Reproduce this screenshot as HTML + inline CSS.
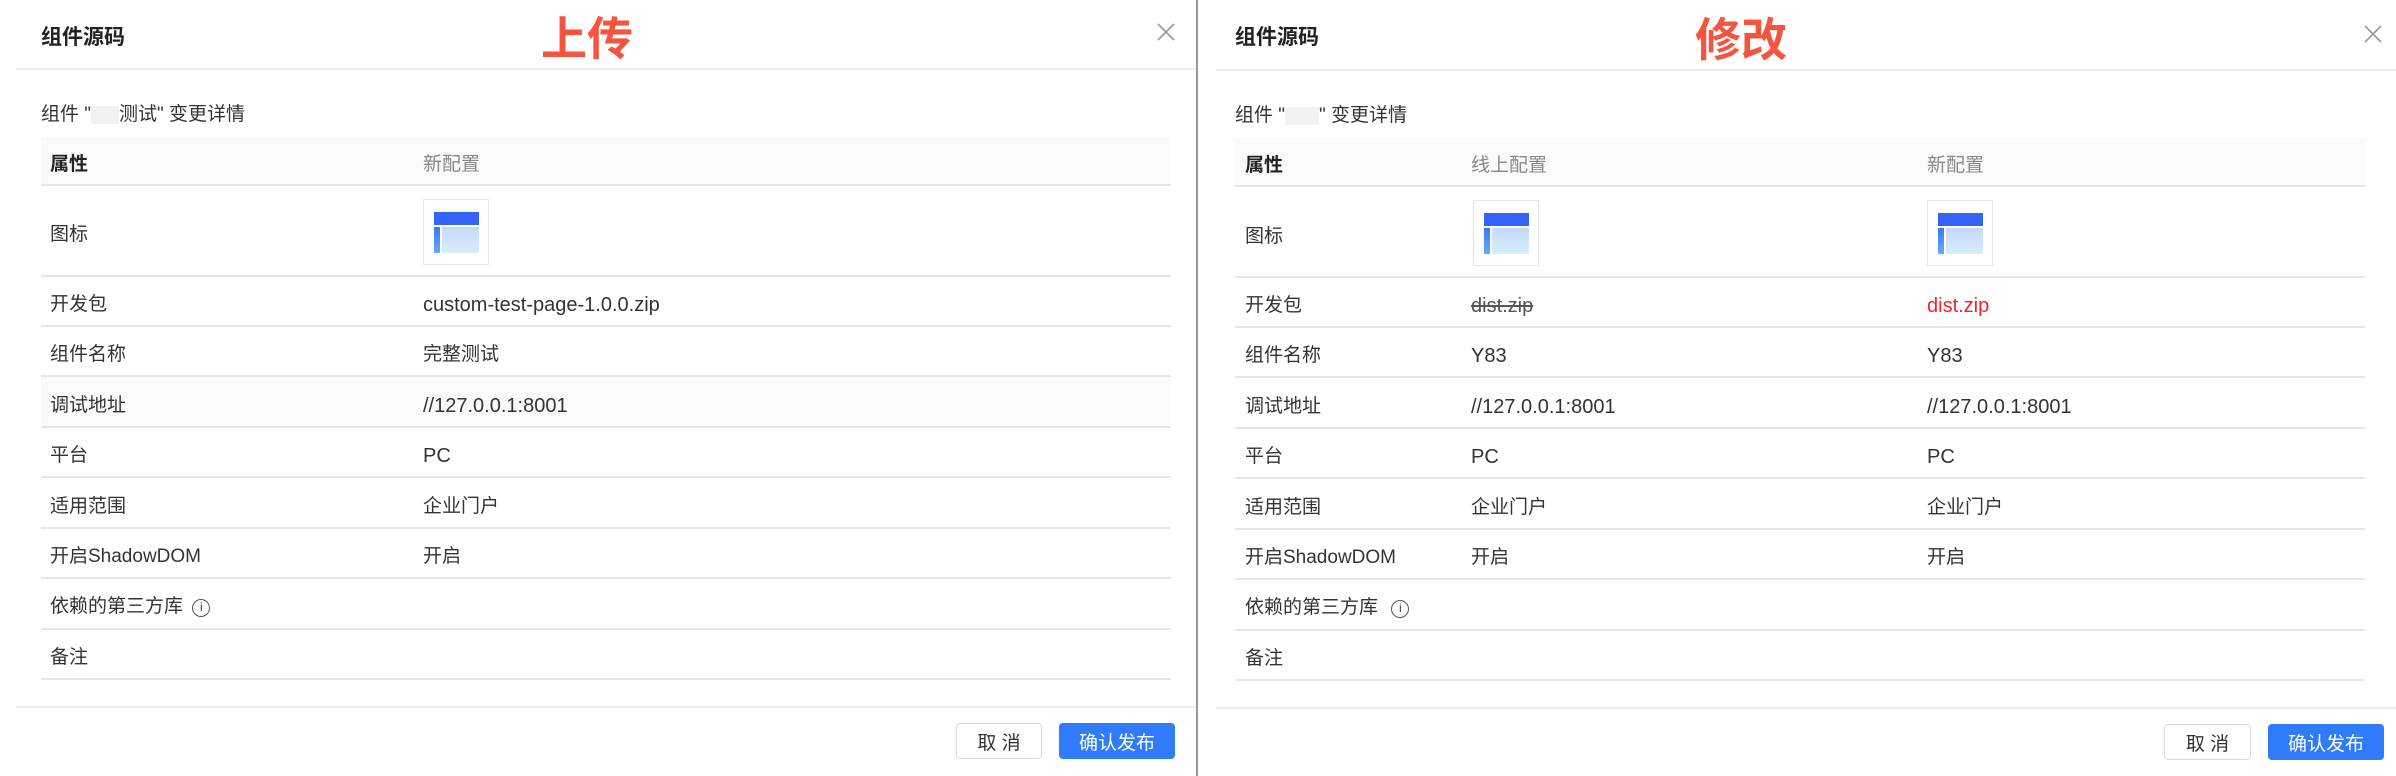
<!DOCTYPE html>
<html><head><meta charset="utf-8"><style>
*{margin:0;padding:0;box-sizing:border-box}
body{width:2396px;height:776px;background:#fff;position:relative;overflow:hidden;font-family:"Liberation Sans","Noto Sans CJK SC",sans-serif;color:#333}
.a{position:absolute;white-space:nowrap}
.t{font-size:21px;font-weight:bold;color:#222}
.red{font-size:46px;font-weight:bold;color:#f5543f;line-height:1}
.hl{position:absolute;height:2px;background:#ebebeb}
.c{font-size:19px;color:#333;line-height:20px;margin-top:3px}
.l{font-size:20px}
.g{color:#888}
.row{position:absolute;border-bottom:2px solid #e6e6e6}
.ic{position:absolute;width:66px;height:66px;border:1px solid #e6e6e6;background:#fff}
.ic i{position:absolute;display:block}
.btn{position:absolute;height:36px;border-radius:4px;font-size:19px;display:flex;align-items:center;justify-content:center}
.x{position:absolute;width:18px;height:18px}
</style></head><body>

<div style="position:absolute;left:1196px;top:0;width:2px;height:776px;background:#9a9a9a"></div>

<!-- LEFT -->
<div class="a t" style="left:41px;top:21px">组件源码</div>
<div class="a red" style="left:541px;top:16px">上传</div>
<svg class="x" style="left:1157px;top:23px" viewBox="0 0 18 18"><path d="M1 1L17 17M17 1L1 17" stroke="#999" stroke-width="1.6"/></svg>
<div class="hl" style="left:16px;top:68px;width:1180px"></div>
<div class="a c" style="left:41px;top:102px">组件 "<span style="display:inline-block;width:28px;height:18px;background:#f2f2f2;vertical-align:middle"></span>测试" 变更详情</div>

<div class="row" style="left:41px;top:137px;width:1130px;height:49px;background:#fafafa"></div>
<div class="a c" style="left:50px;top:152px;font-weight:bold;color:#222">属性</div>
<div class="a c g" style="left:423px;top:152px">新配置</div>

<div class="row" style="left:41px;top:186px;width:1130px;height:91px"></div>
<div class="a c" style="left:50px;top:222px">图标</div>
<div class="ic" style="left:423px;top:199px"><i style="left:10px;top:12px;width:45px;height:13px;background:#3563f5"></i><i style="left:10px;top:27px;width:6px;height:26px;background:linear-gradient(#3b78f5,#6aa9fb)"></i><i style="left:18px;top:27px;width:37px;height:26px;background:linear-gradient(#c6d8fb,#d9edfd)"></i></div>

<div class="row" style="left:41px;top:277px;width:1130px;height:50px"></div>
<div class="a c" style="left:50px;top:292px">开发包</div>
<div class="a c l" style="left:423px;top:292px">custom-test-page-1.0.0.zip</div>
<div class="row" style="left:41px;top:327px;width:1130px;height:50px"></div>
<div class="a c" style="left:50px;top:342px">组件名称</div>
<div class="a c" style="left:423px;top:342px">完整测试</div>
<div class="row" style="left:41px;top:377px;width:1130px;height:51px;background:#fafafa"></div>
<div class="a c" style="left:50px;top:393px">调试地址</div>
<div class="a c l" style="left:423px;top:393px">//127.0.0.1:8001</div>
<div class="row" style="left:41px;top:428px;width:1130px;height:50px"></div>
<div class="a c" style="left:50px;top:443px">平台</div>
<div class="a c l" style="left:423px;top:443px">PC</div>
<div class="row" style="left:41px;top:478px;width:1130px;height:51px"></div>
<div class="a c" style="left:50px;top:494px">适用范围</div>
<div class="a c" style="left:423px;top:494px">企业门户</div>
<div class="row" style="left:41px;top:529px;width:1130px;height:50px"></div>
<div class="a c" style="left:50px;top:544px">开启ShadowDOM</div>
<div class="a c" style="left:423px;top:544px">开启</div>
<div class="row" style="left:41px;top:579px;width:1130px;height:51px"></div>
<div class="a c" style="left:50px;top:594px">依赖的第三方库 <span style="display:inline-block;width:18px;height:18px;border:1.5px solid #555;border-radius:50%;font-size:12px;line-height:15px;text-align:center;vertical-align:1px;margin-left:4px">i</span></div>
<div class="row" style="left:41px;top:630px;width:1130px;height:50px"></div>
<div class="a c" style="left:50px;top:645px">备注</div>

<div class="hl" style="left:16px;top:706px;width:1180px"></div>
<div class="btn" style="left:956px;top:723px;width:86px;border:1px solid #d9d9d9;color:#333">取 消</div>
<div class="btn" style="left:1059px;top:723px;width:116px;background:#2f7bfc;color:#fff">确认发布</div>

<!-- RIGHT -->
<div class="a t" style="left:1235px;top:21px">组件源码</div>
<div class="a red" style="left:1695px;top:17px">修改</div>
<svg class="x" style="left:2364px;top:25px" viewBox="0 0 18 18"><path d="M1 1L17 17M17 1L1 17" stroke="#999" stroke-width="1.6"/></svg>
<div class="hl" style="left:1216px;top:69px;width:1180px"></div>
<div class="a c" style="left:1235px;top:103px">组件 "<span style="display:inline-block;width:34px;height:18px;background:#f2f2f2;vertical-align:middle"></span>" 变更详情</div>

<div class="row" style="left:1235px;top:138px;width:1130px;height:49px;background:#fafafa"></div>
<div class="a c" style="left:1245px;top:153px;font-weight:bold;color:#222">属性</div>
<div class="a c g" style="left:1471px;top:153px">线上配置</div>
<div class="a c g" style="left:1927px;top:153px">新配置</div>

<div class="row" style="left:1235px;top:187px;width:1130px;height:91px"></div>
<div class="a c" style="left:1245px;top:224px">图标</div>
<div class="ic" style="left:1473px;top:200px"><i style="left:10px;top:12px;width:45px;height:13px;background:#3563f5"></i><i style="left:10px;top:27px;width:6px;height:26px;background:linear-gradient(#3b78f5,#6aa9fb)"></i><i style="left:18px;top:27px;width:37px;height:26px;background:linear-gradient(#c6d8fb,#d9edfd)"></i></div>
<div class="ic" style="left:1927px;top:200px"><i style="left:10px;top:12px;width:45px;height:13px;background:#3563f5"></i><i style="left:10px;top:27px;width:6px;height:26px;background:linear-gradient(#3b78f5,#6aa9fb)"></i><i style="left:18px;top:27px;width:37px;height:26px;background:linear-gradient(#c6d8fb,#d9edfd)"></i></div>

<div class="row" style="left:1235px;top:278px;width:1130px;height:50px"></div>
<div class="a c" style="left:1245px;top:293px">开发包</div>
<div class="a c l" style="left:1471px;top:293px;text-decoration:line-through;color:#555">dist.zip</div>
<div class="a c l" style="left:1927px;top:293px;color:#f5222d">dist.zip</div>
<div class="row" style="left:1235px;top:328px;width:1130px;height:50px"></div>
<div class="a c" style="left:1245px;top:343px">组件名称</div>
<div class="a c l" style="left:1471px;top:343px">Y83</div>
<div class="a c l" style="left:1927px;top:343px">Y83</div>
<div class="row" style="left:1235px;top:378px;width:1130px;height:51px"></div>
<div class="a c" style="left:1245px;top:394px">调试地址</div>
<div class="a c l" style="left:1471px;top:394px">//127.0.0.1:8001</div>
<div class="a c l" style="left:1927px;top:394px">//127.0.0.1:8001</div>
<div class="row" style="left:1235px;top:429px;width:1130px;height:50px"></div>
<div class="a c" style="left:1245px;top:444px">平台</div>
<div class="a c l" style="left:1471px;top:444px">PC</div>
<div class="a c l" style="left:1927px;top:444px">PC</div>
<div class="row" style="left:1235px;top:479px;width:1130px;height:51px"></div>
<div class="a c" style="left:1245px;top:495px">适用范围</div>
<div class="a c" style="left:1471px;top:495px">企业门户</div>
<div class="a c" style="left:1927px;top:495px">企业门户</div>
<div class="row" style="left:1235px;top:530px;width:1130px;height:50px"></div>
<div class="a c" style="left:1245px;top:545px">开启ShadowDOM</div>
<div class="a c" style="left:1471px;top:545px">开启</div>
<div class="a c" style="left:1927px;top:545px">开启</div>
<div class="row" style="left:1235px;top:580px;width:1130px;height:51px"></div>
<div class="a c" style="left:1245px;top:595px">依赖的第三方库 <span style="display:inline-block;width:18px;height:18px;border:1.5px solid #555;border-radius:50%;font-size:12px;line-height:15px;text-align:center;vertical-align:1px;margin-left:8px">i</span></div>
<div class="row" style="left:1235px;top:631px;width:1130px;height:50px"></div>
<div class="a c" style="left:1245px;top:646px">备注</div>

<div class="hl" style="left:1216px;top:707px;width:1180px"></div>
<div class="btn" style="left:2164px;top:724px;width:87px;border:1px solid #d9d9d9;color:#333">取 消</div>
<div class="btn" style="left:2268px;top:724px;width:116px;background:#2f7bfc;color:#fff">确认发布</div>
</body></html>
